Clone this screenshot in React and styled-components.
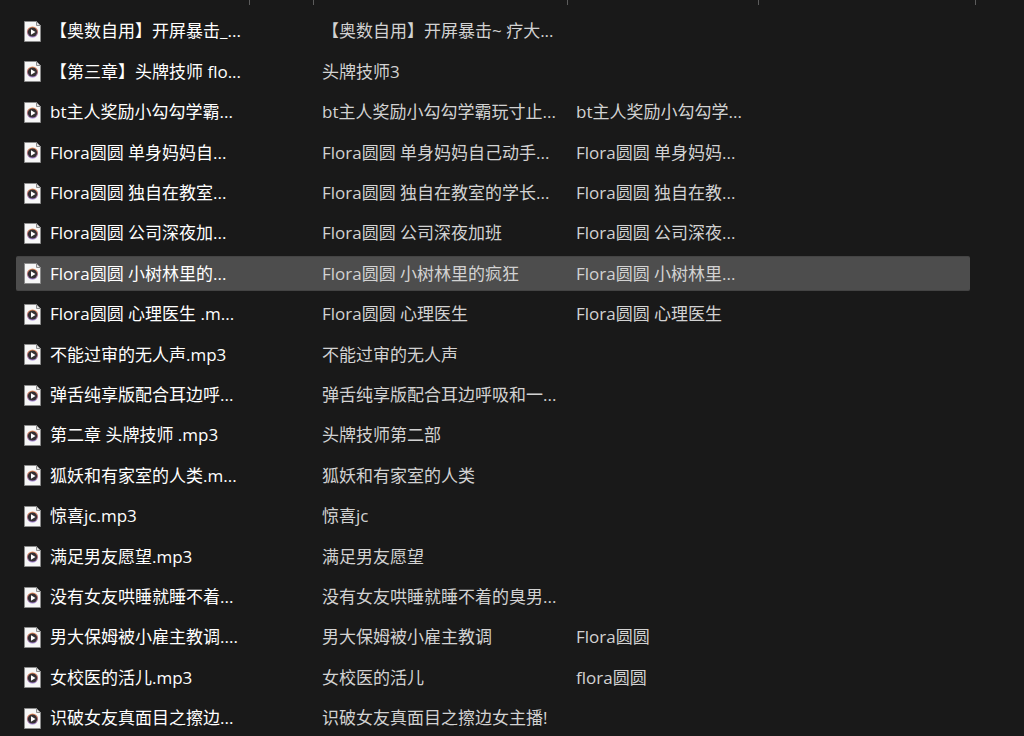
import React from 'react';
import styled, { createGlobalStyle, css } from 'styled-components';

const GlobalStyle = createGlobalStyle`
  * { box-sizing: border-box; }
  body {
    margin: 0;
    background: #191919;
    color: #fff;
    font-family: "Open Sans", "Noto Sans CJK SC", sans-serif;
    font-size: 17px;
  }
`;

const Pane = styled.main`
  height: 100vh;
  overflow: auto;
  scrollbar-width: none;
  padding-left: 16px;
`;

const FileTable = styled.table`
  table-layout: fixed;
  width: 960px;
  border-collapse: separate;
  border-spacing: 0;
`;

const Column = styled.col`
  width: ${(p) => p.$width}px;
`;

const HeaderCell = styled.th`
  height: 5px;
  padding: 0;
  border-right: 1px solid #5c5c5c;
`;

const Row = styled.tr`
  height: 40px;
  &:nth-child(5n + 2),
  &:nth-child(5n + 4) {
    height: 41px;
  }
`;

const Cell = styled.td`
  padding: 0;
  vertical-align: middle;
  &:last-child {
    padding-right: 6px;
  }
`;

const CellBody = styled.div`
  display: flex;
  align-items: center;
  gap: 9px;
  height: 35px;
  padding-left: 8px;
  line-height: 24px;
  white-space: pre;
  color: ${(p) => (p.$name ? '#fff' : '#d2d2d2')};
  ${(p) =>
    p.$selected &&
    css`
      background: #4d4d4d;
      border: solid #444;
      border-width: 1px 0;
      ${Cell}:first-child > & {
        border-radius: 2px 0 0 2px;
      }
      ${Cell}:last-child > & {
        border-radius: 0 2px 2px 0;
      }
    `}
`;

const Body = styled.tbody`
  &::before {
    content: '';
    display: table-row;
    height: 6px;
  }
`;

const FileIcon = styled.svg`
  flex: none;
  display: block;
  width: 17px;
  height: 21px;
`;

const columns = [234, 64, 254, 191, 217];

const files = [
  ['【奥数自用】开屏暴击_...', '【奥数自用】开屏暴击~ 疗大...', ''],
  ['【第三章】头牌技师 flo...', '头牌技师3', ''],
  ['bt主人奖励小勾勾学霸...', 'bt主人奖励小勾勾学霸玩寸止...', 'bt主人奖励小勾勾学...'],
  ['Flora圆圆 单身妈妈自...', 'Flora圆圆 单身妈妈自己动手...', 'Flora圆圆 单身妈妈...'],
  ['Flora圆圆 独自在教室...', 'Flora圆圆 独自在教室的学长...', 'Flora圆圆 独自在教...'],
  ['Flora圆圆 公司深夜加...', 'Flora圆圆 公司深夜加班', 'Flora圆圆 公司深夜...'],
  ['Flora圆圆 小树林里的...', 'Flora圆圆 小树林里的疯狂', 'Flora圆圆 小树林里...'],
  ['Flora圆圆 心理医生 .m...', 'Flora圆圆 心理医生', 'Flora圆圆 心理医生'],
  ['不能过审的无人声.mp3', '不能过审的无人声', ''],
  ['弹舌纯享版配合耳边呼...', '弹舌纯享版配合耳边呼吸和一...', ''],
  ['第二章 头牌技师 .mp3', '头牌技师第二部', ''],
  ['狐妖和有家室的人类.m...', '狐妖和有家室的人类', ''],
  ['惊喜jc.mp3', '惊喜jc', ''],
  ['满足男友愿望.mp3', '满足男友愿望', ''],
  ['没有女友哄睡就睡不着...', '没有女友哄睡就睡不着的臭男...', ''],
  ['男大保姆被小雇主教调....', '男大保姆被小雇主教调', 'Flora圆圆'],
  ['女校医的活儿.mp3', '女校医的活儿', 'flora圆圆'],
  ['识破女友真面目之擦边...', '识破女友真面目之擦边女主播!', ''],
];

const SELECTED = 6;

function AudioFileIcon({ id }) {
  const ring = `disc-ring-${id}`;
  return (
    <FileIcon viewBox="0 0 17 21" aria-hidden="true">
      <defs>
        <linearGradient id={ring} x1="0" y1="0" x2="0" y2="1">
          <stop offset="0" stopColor="#f0935a" />
          <stop offset=".5" stopColor="#b0707a" />
          <stop offset="1" stopColor="#9a7fd6" />
        </linearGradient>
      </defs>
      <path d="M.5.5H12.5L16.5 4.5V20.5H.5Z" fill="#f7f7f7" stroke="#8c8c8c" />
      <path d="M12.5.5V4.5H16.5Z" fill="#dedede" stroke="#8c8c8c" />
      <circle cx="8.5" cy="11" r="5.6" fill={`url(#${ring})`} />
      <circle cx="8.5" cy="11" r="4.6" fill="#333033" />
      <path d="M7 8.2V13.8L11.5 11Z" fill="#fff" />
    </FileIcon>
  );
}

export default function App() {
  return (
    <>
      <GlobalStyle />
      <Pane>
        <FileTable>
          <colgroup>
            {columns.map((width, i) => (
              <Column key={i} $width={width} />
            ))}
          </colgroup>
          <thead>
            <tr>
              {columns.map((width, i) => (
                <HeaderCell key={i} scope="col" />
              ))}
            </tr>
          </thead>
          <Body>
            {files.map(([name, title, artist], i) => {
              const selected = i === SELECTED;
              return (
                <Row key={name} aria-selected={selected}>
                  <Cell>
                    <CellBody $name $selected={selected}>
                      <AudioFileIcon id={i} />
                      {name}
                    </CellBody>
                  </Cell>
                  <Cell><CellBody $selected={selected} /></Cell>
                  <Cell><CellBody $selected={selected}>{title}</CellBody></Cell>
                  <Cell><CellBody $selected={selected}>{artist}</CellBody></Cell>
                  <Cell><CellBody $selected={selected} /></Cell>
                </Row>
              );
            })}
          </Body>
        </FileTable>
      </Pane>
    </>
  );
}
